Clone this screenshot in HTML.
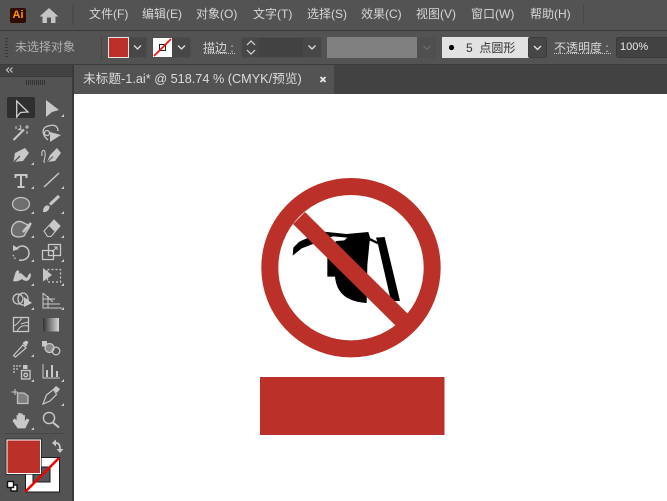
<!DOCTYPE html>
<html><head><meta charset="utf-8">
<style>
html,body{margin:0;padding:0;width:667px;height:501px;overflow:hidden;background:#535353}
body{position:relative;font-family:"Liberation Sans","Noto Sans CJK SC",sans-serif}
.a{position:absolute}
.t{position:absolute;white-space:nowrap;line-height:16px;font-size:12px;color:#d6d6d6}
</style></head><body>
<div class="a" style="left:0;top:30px;width:667px;height:1px;background:#3a3a3a"></div>
<div class="a" style="left:0;top:64px;width:667px;height:1px;background:#3c3c3c"></div>
<div class="a" style="left:0;top:65px;width:72px;height:11px;background:#424242"></div>
<div class="a" style="left:0;top:76px;width:72px;height:1px;background:#3a3a3a"></div>
<div class="a" style="left:72px;top:65px;width:2px;height:436px;background:#3a3a3a"></div>
<div class="a" style="left:74px;top:65px;width:593px;height:29px;background:#424242"></div>
<div class="a" style="left:74px;top:65px;width:260px;height:29px;background:#535353"></div>
<div class="a" style="left:74px;top:94px;width:593px;height:407px;background:#fff"></div>

<!-- Ai logo and home -->
<div class="a" style="left:10px;top:8px;width:16px;height:15px;background:#330c00;border-radius:2px"></div>
<div class="t" style="left:12.500px;top:7px;font-size:11px;color:#ff9a00;font-weight:bold">Ai</div>
<svg class="a" style="left:0;top:0" width="74" height="30"><path d="M39.500 16.500L49 8L58.500 16.500L55.500 16.500V23H51V17.500H47V23H42.500V16.500Z" fill="#c4c4c4"/><rect x="72" y="5" width="1.500" height="20" fill="#474747"/></svg>

<!-- Menu -->
<div class="t" style="left:89px;top:6px">文件(F)</div>
<div class="t" style="left:142px;top:6px">编辑(E)</div>
<div class="t" style="left:196px;top:6px">对象(O)</div>
<div class="t" style="left:253px;top:6px">文字(T)</div>
<div class="t" style="left:307px;top:6px">选择(S)</div>
<div class="t" style="left:361px;top:6px">效果(C)</div>
<div class="t" style="left:416px;top:6px">视图(V)</div>
<div class="t" style="left:471px;top:6px">窗口(W)</div>
<div class="t" style="left:530px;top:6px">帮助(H)</div>
<div class="a" style="left:583px;top:5px;width:1px;height:20px;background:#474747"></div>

<!-- Control bar -->
<svg class="a" style="left:0;top:31px" width="667" height="33">
<g fill="#383838"><rect x="5" y="7" width="3" height="1"/><rect x="5" y="10" width="3" height="1"/><rect x="5" y="13" width="3" height="1"/><rect x="5" y="16" width="3" height="1"/><rect x="5" y="19" width="3" height="1"/><rect x="5" y="22" width="3" height="1"/><rect x="5" y="25" width="3" height="1"/></g>
<rect x="101" y="5" width="1" height="24" fill="#474747"/>
<rect x="108.500" y="6.500" width="38" height="20" rx="1.500" fill="#474747" stroke="#4d4d4d"/>
<rect x="108.500" y="6.500" width="20" height="20" fill="#bb3129" stroke="#e6e6e6"/>
<path d="M134 14.500L137.500 18L141 14.500" fill="none" stroke="#e0e0e0" stroke-width="1.300"/>
<rect x="152.500" y="6.500" width="38" height="20" rx="1.500" fill="#474747" stroke="#4d4d4d"/>
<rect x="153" y="7" width="19" height="19" fill="#fff"/>
<rect x="159.500" y="13.500" width="6" height="6" fill="none" stroke="#222"/>
<path d="M154 25L171 8" stroke="#f01010" stroke-width="1.800"/>
<path d="M178 14.500L181.500 18L185 14.500" fill="none" stroke="#e0e0e0" stroke-width="1.300"/>
<rect x="241.500" y="6.500" width="80" height="20" rx="1.500" fill="#474747" stroke="#4d4d4d"/>
<rect x="259" y="7" width="44" height="19" fill="#424242"/>
<path d="M247 14L251 10L255 14M247 19L251 23L255 19" fill="none" stroke="#d8d8d8" stroke-width="1.200"/>
<path d="M308.500 14.500L312 18L315.500 14.500" fill="none" stroke="#e0e0e0" stroke-width="1.300"/>
<rect x="327" y="6" width="90" height="21" fill="#808080"/>
<rect x="417" y="6" width="19" height="21" fill="#4f4f4f"/>
<path d="M423.500 15L427 18.500L430.500 15" fill="none" stroke="#6a6a6a" stroke-width="1.300"/>
<rect x="442" y="6" width="88" height="21" fill="#e2e2e2"/>
<circle cx="451.500" cy="16.500" r="2.600" fill="#000"/>
<rect x="528.500" y="6.500" width="18" height="20" rx="1.500" fill="#474747" stroke="#3e3e3e"/>
<path d="M534 15L537.500 18.500L541 15" fill="none" stroke="#e8e8e8" stroke-width="1.300"/>
<rect x="616.500" y="6.500" width="60" height="20" rx="2" fill="#424242" stroke="#3a3a3a"/>
<path d="M204 22.500H235M554 22.500H611" stroke="#c8c8c8" stroke-dasharray="1 1"/>
</svg>
<div class="t" style="left:15px;top:39px;color:#b0b0b0">未选择对象</div>
<div class="t" style="left:203px;top:40px">描边 :</div>
<div class="t" style="left:466px;top:40px;color:#333">5 &nbsp;点圆形</div>
<div class="t" style="left:554px;top:40px">不透明度 :</div>
<div class="t" style="left:620px;top:39px;font-size:11px;color:#e8e8e8">100%</div>

<!-- Tab -->
<div class="t" style="left:83px;top:71px;font-size:12.700px;color:#dcdcdc">未标题-1.ai* @ 518.74 % (CMYK/预览)</div>
<svg class="a" style="left:319px;top:75px" width="10" height="10"><path d="M1.500 2L6.500 7M6.500 2L1.500 7" stroke="#e8e8e8" stroke-width="1.800"/></svg>

<!-- Panel strip -->
<svg class="a" style="left:0;top:65px" width="72" height="25" fill="none">
<path d="M9 2.500L6.500 5L9 7.500M12.500 2.500L10 5L12.500 7.500" stroke="#c0c0c0" stroke-width="1.200"/>
<g fill="#333"><rect x="26" y="15" width="1" height="5"/><rect x="28" y="15" width="1" height="5"/><rect x="30" y="15" width="1" height="5"/><rect x="32" y="15" width="1" height="5"/><rect x="34" y="15" width="1" height="5"/><rect x="36" y="15" width="1" height="5"/><rect x="38" y="15" width="1" height="5"/><rect x="40" y="15" width="1" height="5"/><rect x="42" y="15" width="1" height="5"/><rect x="44" y="15" width="1" height="5"/></g>
</svg>

<!-- Toolbar -->
<svg class="a" style="left:0;top:90px" width="72" height="411" fill="none" stroke="#c8c8c8" stroke-width="1.300">
<rect x="7" y="7" width="28" height="21" rx="2" fill="#2f2f2f" stroke="none"/>
<path d="M16.700 11V27L20.500 22.500L28 22Z" stroke="#d0d0d0"/>
<path d="M46 10V27L52 22L59 20Z" fill="#c8c8c8" stroke="none"/>
<!-- wand, lasso -->
<path d="M13.500 50L24 39.500" stroke-width="2"/><path d="M20 35L21 38L18.500 39.500L22 40M16 36V39M27 35V39M25 37H29M27 41V44" stroke-width="1"/>
<path d="M48 50C42 45 41 38 48 36C54 34 58 36 58 41"/><circle cx="47" cy="43" r="2.500"/><path d="M50 42V52L61 45Z" fill="#c8c8c8" stroke="none"/>
<!-- pens -->
<path d="M13.500 72L15 63L25 58L29 63L23 71Z" fill="#c8c8c8" stroke="none"/><path d="M14 72L20 66" stroke="#535353"/>
<path d="M42 66C41 60 44 59 45 62C46 69 42 73 45 72" stroke-width="1.100"/><path d="M47 72L50 65L57 58L61 63L55 71Z" fill="#c8c8c8" stroke="none"/><path d="M47.500 72L53 66.500" stroke="#535353" stroke-width="1"/>
<!-- type, line -->
<path d="M15.500 88V85H26.500V88M21 85V97M17.500 97H24.500" stroke-width="2"/>
<path d="M44 97L59 83" stroke-width="1.500"/>
<!-- ellipse, brush -->
<ellipse cx="21" cy="114" rx="8.500" ry="6.500" fill="#6e6e6e" stroke="#c0c0c0"/>
<path d="M43 122C43 117 46 114 49.500 116C50 119 47 123 43 122Z" fill="#c8c8c8" stroke="none"/><path d="M50 114.500L59 106" stroke="#c8c8c8" stroke-width="3"/>
<!-- blob, eraser -->
<path d="M11.500 141C11.500 134 17 130 22 132L30 136L24 146C18 148 11.500 147 11.500 141Z" fill="#6e6e6e"/><path d="M23 142L31 133" stroke-width="2.500"/>
<path d="M44 141L54 130L60 136L51 146.500H47.500Z" stroke-width="1.100"/><path d="M49 136L54 130L60 136L55 142Z" fill="#c8c8c8" stroke="none"/>
<!-- rotate, scale -->
<path d="M16 159C22 153 29 157 29 163C29 169 23 171 19 170" stroke-width="1.500"/><path d="M13 161V155L19 159Z" fill="#c8c8c8" stroke="none"/><path d="M13 165L16 170" stroke-dasharray="1.500 1.500"/>
<rect x="42.500" y="160.500" width="11" height="9"/><rect x="48.500" y="154.500" width="12" height="11"/><path d="M52 162L57 157M54 157H57V160" stroke-width="1"/>
<!-- warp, free transform -->
<path d="M13 191L15 184C17 178 20 180 19 184C21 181 24 187 27 188C29 184 30 181 31 185C30 192 25 192 22 189C19 191 16 192 13 191Z" fill="#c8c8c8" stroke="none"/>
<path d="M43 178V191.500L52 185Z" fill="#c8c8c8" stroke="none"/><rect x="47.500" y="179.500" width="13" height="12.500" stroke-dasharray="2 2"/>
<!-- shape builder, perspective -->
<ellipse cx="18" cy="209" rx="5" ry="5"/><ellipse cx="23" cy="209" rx="5" ry="6"/><path d="M24 207V217L32 213Z" fill="#c8c8c8" stroke="none"/>
<path d="M43 203V218H62M43 203L53 212M43 209H55M43 214H60M48 206V218" stroke-width="1"/>
<!-- mesh, gradient -->
<rect x="13.500" y="227.500" width="15" height="14"/><path d="M14 236C19 233 21 229 22 228M17 242C19 236 24 235 28 236M21 234L28 232" stroke-width="1"/>
<defs><linearGradient id="g"><stop offset="0" stop-color="#333"/><stop offset="1" stop-color="#d8d8d8"/></linearGradient></defs>
<rect x="43" y="228" width="16" height="13.500" fill="url(#g)" stroke="none"/>
<!-- eyedropper, blend -->
<path d="M13.500 265.500L23 255L26 258L15.500 267Z" stroke-width="1.200"/><path d="M22.500 253L26 250.500L28.500 252L26 257Z" fill="#c8c8c8" stroke="none"/>
<rect x="42" y="251" width="5" height="5.500" fill="#c8c8c8" stroke="none"/><circle cx="49.500" cy="258" r="4.500" fill="#888"/><circle cx="56" cy="261" r="3.800"/>
<!-- symbol sprayer, graph -->
<g fill="#999" stroke="none"><rect x="13" y="275" width="2" height="2"/><rect x="16" y="275" width="2" height="2"/><rect x="19" y="275" width="2" height="2"/><rect x="13" y="278" width="2" height="2"/><rect x="16" y="278" width="2" height="2"/><rect x="13" y="281" width="2" height="2"/></g>
<rect x="21.500" y="280.500" width="8.500" height="8.500"/><circle cx="25.700" cy="285" r="1.800"/><rect x="23" y="275" width="4.500" height="4" fill="#c8c8c8" stroke="none"/>
<path d="M43 274V288H60" stroke-width="1"/><path d="M46 287V280H48V287ZM51 287V275H53V287ZM56 287V281H58V287Z" fill="#c8c8c8" stroke="none"/>
<!-- artboard, slice -->
<path d="M11.500 302H17.500M15 299V305" stroke-width="1"/><path d="M17.500 303H24L28 306V313.500H17.500Z" fill="#808080" stroke="#c0c0c0"/>
<path d="M43 314L46.500 305L53.500 299.500L56.500 304.500L50 311Z" stroke-width="1.200"/><path d="M53 299L56 296L60 299L57 303Z" fill="#c8c8c8" stroke="none"/>
<!-- hand, zoom -->
<path d="M18 338L13 331L14.500 329L17 331V325.500H18.500V331V323.500H20.500V331V324H22.500V331V325.500H24.500V332L27 329L29 330L25 338Z" fill="#c8c8c8" stroke="#c8c8c8" stroke-width=".8"/>
<circle cx="49" cy="328" r="5.600" stroke-width="1.400"/><path d="M53 332.500L59 337.500" stroke-width="2"/>
<rect x="5" y="343" width="60" height="1" fill="#474747" stroke="none"/>
<!-- small triangles -->
<g fill="#c8c8c8" stroke="none"><path d="M64 27V24L61 27ZM34 75V72L31 75ZM34 99V96L31 99ZM64 99V96L61 99ZM34 124V121L31 124ZM64 124V121L61 124ZM34 148V145L31 148ZM64 148V145L61 148ZM34 172V169L31 172ZM64 172V169L61 172ZM34 196V193L31 196ZM64 196V193L61 196ZM34 220V217L31 220ZM64 220V217L61 220ZM34 267V264L31 267ZM34 292V289L31 292ZM64 292V289L61 292ZM64 316V313L61 316ZM34 340V337L31 340Z"/></g>
</svg>

<!-- Fill/stroke -->
<svg class="a" style="left:0;top:430px" width="72" height="71">
<rect x="25.500" y="27.500" width="34" height="34.500" fill="#fff" stroke="#1a1a1a"/>
<rect x="33" y="37" width="17" height="15" fill="#555" stroke="#1a1a1a"/>
<path d="M25 62L59 28" stroke="#f00000" stroke-width="2.500"/>
<rect x="7" y="10" width="33.500" height="33.500" fill="#bb3129" stroke="#fff"/>
<rect x="6" y="9" width="35.500" height="35.500" fill="none" stroke="#1a1a1a" stroke-width=".6"/>
<rect x="11" y="55" width="6" height="6" fill="#fff" stroke="#111" stroke-width="1.400"/>
<rect x="7.500" y="51.500" width="6" height="6" fill="#fff" stroke="#111" stroke-width="1.400"/>
<path d="M53 13H56C59 13 60 15 60 20" fill="none" stroke="#c8c8c8" stroke-width="1.800"/><path d="M56 9.500L52 13L56 16.500ZM56.500 19H63.500L60 23Z" fill="#c8c8c8"/>
</svg>

<!-- Artwork -->
<svg class="a" style="left:0;top:0" width="667" height="501">
<g transform="translate(290 225) scale(.33333)" fill="#000">
<path d="M8 92L10 68L28 50L55 38L72 56L35 70Z"/>
<path d="M100 20L170 27L235 21L240 38L232 120L230 234C170 230 140 205 135 155H112V70L140 48L163 46L172 38L130 34L105 40Z"/>
<path d="M238 38L262 50L264 58L238 46Z"/>
<path d="M258 38L284 36L330 228L303 228L264 58Z"/>
</g>
<circle cx="351" cy="267.700" r="81.200" fill="none" stroke="#bb3129" stroke-width="17"/>
<path d="M293 224L305 212L408 314L396 326Z" fill="#bb3129"/>
<rect x="260" y="377" width="184.500" height="58" fill="#bb3129"/>
</svg>
</body></html>
